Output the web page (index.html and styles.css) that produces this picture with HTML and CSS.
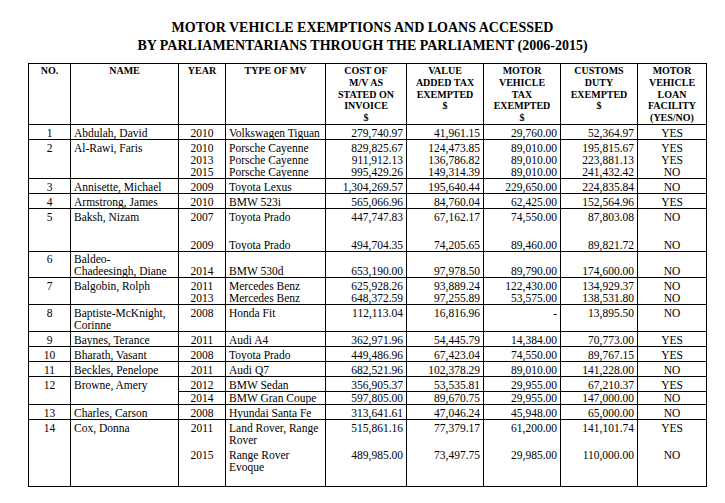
FILE: index.html
```html
<!DOCTYPE html>
<html>
<head>
<meta charset="utf-8">
<link rel="stylesheet" href="styles.css">
</head>
<body>
<div class="page">
  <h1 class="title">MOTOR VEHICLE EXEMPTIONS AND LOANS ACCESSED<br>BY PARLIAMENTARIANS THROUGH THE PARLIAMENT (2006-2015)</h1>
  <table class="grid">
    <colgroup>
      <col class="c-no"><col class="c-name"><col class="c-year"><col class="c-type"><col class="c-cost"><col class="c-vat"><col class="c-mvt"><col class="c-cus"><col class="c-loan">
    </colgroup>
    <thead>
      <tr>
        <th class="h-no">NO.</th>
        <th>NAME</th>
        <th>YEAR</th>
        <th>TYPE OF MV</th>
        <th>COST OF<br>M/V AS<br>STATED ON<br>INVOICE<br>$</th>
        <th>VALUE<br>ADDED TAX<br>EXEMPTED<br>$</th>
        <th>MOTOR<br>VEHICLE<br>TAX<br>EXEMPTED<br>$</th>
        <th>CUSTOMS<br>DUTY<br>EXEMPTED<br>$</th>
        <th>MOTOR<br>VEHICLE<br>LOAN<br>FACILITY<br>(YES/NO)</th>
      </tr>
    </thead>
    <tbody>
      <tr class="grp">
        <td class="no">1</td><td class="txt">Abdulah, David</td><td class="yr">2010</td><td class="txt">Volkswagen Tiguan</td>
        <td class="num">279,740.97</td><td class="num">41,961.15</td><td class="num">29,760.00</td><td class="num">52,364.97</td><td class="yn">YES</td>
      </tr>
      <tr class="grp">
        <td class="no" rowspan="3">2</td><td class="txt" rowspan="3">Al-Rawi, Faris</td><td class="yr">2010</td><td class="txt">Porsche Cayenne</td>
        <td class="num">829,825.67</td><td class="num">124,473.85</td><td class="num">89,010.00</td><td class="num">195,815.67</td><td class="yn">YES</td>
      </tr>
      <tr class="sub">
        <td class="yr">2013</td><td class="txt">Porsche Cayenne</td>
        <td class="num">911,912.13</td><td class="num">136,786.82</td><td class="num">89,010.00</td><td class="num">223,881.13</td><td class="yn">YES</td>
      </tr>
      <tr class="sub">
        <td class="yr">2015</td><td class="txt">Porsche Cayenne</td>
        <td class="num">995,429.26</td><td class="num">149,314.39</td><td class="num">89,010.00</td><td class="num">241,432.42</td><td class="yn">NO</td>
      </tr>
      <tr class="grp">
        <td class="no">3</td><td class="txt">Annisette, Michael</td><td class="yr">2009</td><td class="txt">Toyota Lexus</td>
        <td class="num">1,304,269.57</td><td class="num">195,640.44</td><td class="num">229,650.00</td><td class="num">224,835.84</td><td class="yn">NO</td>
      </tr>
      <tr class="grp">
        <td class="no">4</td><td class="txt">Armstrong, James</td><td class="yr">2010</td><td class="txt">BMW 523i</td>
        <td class="num">565,066.96</td><td class="num">84,760.04</td><td class="num">62,425.00</td><td class="num">152,564.96</td><td class="yn">YES</td>
      </tr>
      <tr class="grp">
        <td class="no" rowspan="2">5</td><td class="txt" rowspan="2">Baksh, Nizam</td><td class="yr">2007</td><td class="txt">Toyota Prado</td>
        <td class="num">447,747.83</td><td class="num">67,162.17</td><td class="num">74,550.00</td><td class="num">87,803.08</td><td class="yn">NO</td>
      </tr>
      <tr class="sub gap">
        <td class="yr">2009</td><td class="txt">Toyota Prado</td>
        <td class="num">494,704.35</td><td class="num">74,205.65</td><td class="num">89,460.00</td><td class="num">89,821.72</td><td class="yn">NO</td>
      </tr>
      <tr class="grp low">
        <td class="no">6</td><td class="txt">Baldeo-<br>Chadeesingh, Diane</td><td class="yr">2014</td><td class="txt">BMW 530d</td>
        <td class="num">653,190.00</td><td class="num">97,978.50</td><td class="num">89,790.00</td><td class="num">174,600.00</td><td class="yn">NO</td>
      </tr>
      <tr class="grp">
        <td class="no" rowspan="2">7</td><td class="txt" rowspan="2">Balgobin, Rolph</td><td class="yr">2011</td><td class="txt">Mercedes Benz</td>
        <td class="num">625,928.26</td><td class="num">93,889.24</td><td class="num">122,430.00</td><td class="num">134,929.37</td><td class="yn">NO</td>
      </tr>
      <tr class="sub">
        <td class="yr">2013</td><td class="txt">Mercedes Benz</td>
        <td class="num">648,372.59</td><td class="num">97,255.89</td><td class="num">53,575.00</td><td class="num">138,531.80</td><td class="yn">NO</td>
      </tr>
      <tr class="grp">
        <td class="no">8</td><td class="txt">Baptiste-McKnight,<br>Corinne</td><td class="yr">2008</td><td class="txt">Honda Fit</td>
        <td class="num">112,113.04</td><td class="num">16,816.96</td><td class="num">-</td><td class="num">13,895.50</td><td class="yn">NO</td>
      </tr>
      <tr class="grp">
        <td class="no">9</td><td class="txt">Baynes, Terance</td><td class="yr">2011</td><td class="txt">Audi A4</td>
        <td class="num">362,971.96</td><td class="num">54,445.79</td><td class="num">14,384.00</td><td class="num">70,773.00</td><td class="yn">YES</td>
      </tr>
      <tr class="grp">
        <td class="no">10</td><td class="txt">Bharath, Vasant</td><td class="yr">2008</td><td class="txt">Toyota Prado</td>
        <td class="num">449,486.96</td><td class="num">67,423.04</td><td class="num">74,550.00</td><td class="num">89,767.15</td><td class="yn">YES</td>
      </tr>
      <tr class="grp">
        <td class="no">11</td><td class="txt">Beckles, Penelope</td><td class="yr">2011</td><td class="txt">Audi Q7</td>
        <td class="num">682,521.96</td><td class="num">102,378.29</td><td class="num">89,010.00</td><td class="num">141,228.00</td><td class="yn">NO</td>
      </tr>
      <tr class="grp">
        <td class="no" rowspan="2">12</td><td class="txt" rowspan="2">Browne, Amery</td><td class="yr">2012</td><td class="txt">BMW Sedan</td>
        <td class="num">356,905.37</td><td class="num">53,535.81</td><td class="num">29,955.00</td><td class="num">67,210.37</td><td class="yn">YES</td>
      </tr>
      <tr class="sub ruled">
        <td class="yr">2014</td><td class="txt">BMW Gran Coupe</td>
        <td class="num">597,805.00</td><td class="num">89,670.75</td><td class="num">29,955.00</td><td class="num">147,000.00</td><td class="yn">NO</td>
      </tr>
      <tr class="grp">
        <td class="no">13</td><td class="txt">Charles, Carson</td><td class="yr">2008</td><td class="txt">Hyundai Santa Fe</td>
        <td class="num">313,641.61</td><td class="num">47,046.24</td><td class="num">45,948.00</td><td class="num">65,000.00</td><td class="yn">NO</td>
      </tr>
      <tr class="grp">
        <td class="no" rowspan="2">14</td><td class="txt" rowspan="2">Cox, Donna</td><td class="yr">2011</td><td class="txt">Land Rover, Range<br>Rover</td>
        <td class="num">515,861.16</td><td class="num">77,379.17</td><td class="num">61,200.00</td><td class="num">141,101.74</td><td class="yn">YES</td>
      </tr>
      <tr class="sub last">
        <td class="yr">2015</td><td class="txt">Range Rover<br>Evoque</td>
        <td class="num">489,985.00</td><td class="num">73,497.75</td><td class="num">29,985.00</td><td class="num">110,000.00</td><td class="yn">NO</td>
      </tr>
    </tbody>
  </table>
</div>
</body>
</html>
```
FILE: styles.css
```css
html, body {
  margin: 0;
  padding: 0;
  background: #ffffff;
}

body {
  font-family: "Liberation Serif", "Times New Roman", serif;
  color: #000000;
}

.page {
  padding-top: 19px;
}

.title {
  margin: 0;
  text-align: center;
  font-size: 14px;
  line-height: 18px;
  font-weight: bold;
}

.grid {
  margin: 8px 0 0 28px;
  width: 678px;
  table-layout: fixed;
  border-collapse: collapse;
  border: 1px solid #000;
}

.c-no { width: 42px; }
.c-name { width: 108px; }
.c-year { width: 47px; }
.c-type { width: 100px; }
.c-cost { width: 81px; }
.c-vat { width: 77px; }
.c-mvt { width: 77px; }
.c-cus { width: 77px; }
.c-loan { width: 69px; }

.grid th {
  border: 1px solid #000;
  font-size: 10px;
  line-height: 11.8px;
  font-weight: bold;
  text-align: center;
  vertical-align: top;
  padding: 1px 2px 0;
  white-space: nowrap;
}

.grid td {
  border-left: 1px solid #000;
  border-right: 1px solid #000;
  font-size: 11.5px;
  line-height: 12px;
  padding: 0 3px;
  vertical-align: top;
  white-space: nowrap;
}

.grid tr.grp td {
  border-top: 1px solid #000;
  padding-top: 2px;
}

.grid tr.ruled td {
  border-top: 1px solid #000;
}

.grid td.no {
  text-align: center;
}

.grid td.txt {
  text-align: left;
}

.grid td.yr {
  text-align: center;
}

.grid td.num {
  text-align: right;
}

.grid td.yn {
  text-align: center;
}

.grid tr.gap td {
  padding-top: 16px;
}

.grid tr.low td {
  vertical-align: bottom;
  padding-top: 1px;
}

.grid tr.low td.no,
.grid tr.low td.txt:nth-child(2) {
  vertical-align: top;
}

.grid tr.last td {
  padding-top: 3px;
  padding-bottom: 13px;
}
```
